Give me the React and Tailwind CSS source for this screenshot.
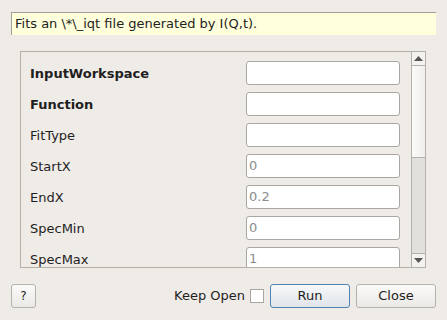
import React from 'react';

const rows = [
  { label: 'InputWorkspace', bold: true, value: '' },
  { label: 'Function', bold: true, value: '' },
  { label: 'FitType', bold: false, value: '' },
  { label: 'StartX', bold: false, value: '0' },
  { label: 'EndX', bold: false, value: '0.2' },
  { label: 'SpecMin', bold: false, value: '0' },
  { label: 'SpecMax', bold: false, value: '1' },
];

function Triangle({ up }) {
  return (
    <svg width="9" height="5" viewBox="0 0 9 5">
      <path d={up ? 'M0 5 L4.5 0 L9 5 Z' : 'M0 0 L4.5 5 L9 0 Z'} fill="#555" />
    </svg>
  );
}

export default function App() {
  return (
    <div
      className="w-[447px] h-[320px] bg-[#efebe7] flex flex-col text-[13px] text-[#1e1e1e] overflow-hidden"
      style={{ fontFamily: '"DejaVu Sans", sans-serif' }}
    >
      {/* description */}
      <div className="mt-[12px] ml-[11px] mr-[11px] h-[23px] bg-[#ffffdc] border-t border-l border-[#a0a09a] flex items-center pl-[3px]">
        Fits an \*\_iqt file generated by I(Q,t).
      </div>

      {/* property scroll area */}
      <div className="mt-[16px] ml-[20px] mr-[21px] h-[217px] border border-[#b4b0aa] flex">
        <div className="flex-1 overflow-hidden pt-[9px] pl-[9px] pr-[11px] flex flex-col gap-[7px]">
          {rows.map((r) => (
            <div key={r.label} className="flex items-center justify-between h-[24px] shrink-0">
              <span className={'pt-[1px] ' + (r.bold ? 'font-bold' : '')}>{r.label}</span>
              <div className="w-[154px] h-[24px] bg-white border border-[#aaa7a2] rounded-[3px] flex items-center pl-[2px] text-[#8c8c8c]">
                {r.value}
              </div>
            </div>
          ))}
        </div>
        <div className="w-[14px] border-l border-[#b4b0aa] flex flex-col">
          <div className="h-[14px] border-b border-[#b4b0aa] bg-[#f4f2ef] flex items-center justify-center">
            <Triangle up />
          </div>
          <div className="h-[92px] bg-gradient-to-r from-[#fbfbfa] to-[#f0eeeb] border-b border-[#b4b0aa]" />
          <div className="flex-1 bg-[#e2e0dd]" />
          <div className="h-[14px] border-t border-[#b4b0aa] bg-[#f4f2ef] flex items-center justify-center">
            <Triangle />
          </div>
        </div>
      </div>

      {/* buttons */}
      <div className="mt-[16px] ml-[11px] mr-[11px] flex items-center">
        <button className="w-[25px] h-[24px] border border-[#b5b1ab] rounded-[3px] bg-gradient-to-b from-[#fafaf9] to-[#ebe9e6] text-[12px]">
          ?
        </button>
        <div className="flex-1" />
        <span className="mr-[5px]">Keep Open</span>
        <div className="w-[14px] h-[14px] bg-white border border-[#aaa7a2] mr-[6px]" />
        <button className="w-[80px] h-[24px] border border-[#4f82b0] rounded-[3px] bg-gradient-to-b from-[#f7f8f9] to-[#e0e4e9]">
          Run
        </button>
        <button className="ml-[6px] w-[80px] h-[24px] border border-[#b5b1ab] rounded-[3px] bg-gradient-to-b from-[#fafaf9] to-[#ebe9e6]">
          Close
        </button>
      </div>
    </div>
  );
}
